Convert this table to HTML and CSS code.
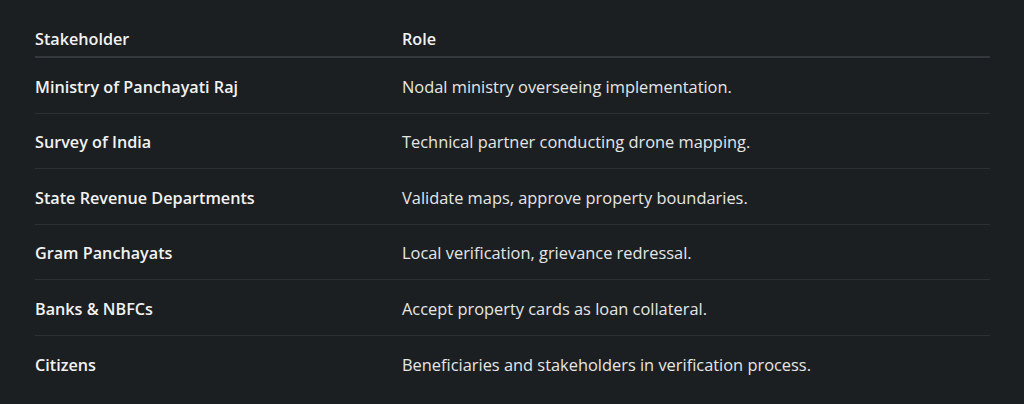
FILE: index.html
```html
<!DOCTYPE html>
<html lang="en">
<head>
<meta charset="utf-8">
<link rel="stylesheet" href="styles.css">
</head>
<body>
<div class="page">
  <div class="table">
    <div class="row head">
      <div class="cell c1">Stakeholder</div>
      <div class="cell c2">Role</div>
    </div>
    <div class="row">
      <div class="cell c1">Ministry of Panchayati Raj</div>
      <div class="cell c2">Nodal ministry overseeing implementation.</div>
    </div>
    <div class="row">
      <div class="cell c1">Survey of India</div>
      <div class="cell c2">Technical partner conducting drone mapping.</div>
    </div>
    <div class="row">
      <div class="cell c1">State Revenue Departments</div>
      <div class="cell c2">Validate maps, approve property boundaries.</div>
    </div>
    <div class="row">
      <div class="cell c1">Gram Panchayats</div>
      <div class="cell c2">Local verification, grievance redressal.</div>
    </div>
    <div class="row">
      <div class="cell c1">Banks &amp; NBFCs</div>
      <div class="cell c2">Accept property cards as loan collateral.</div>
    </div>
    <div class="row last">
      <div class="cell c1">Citizens</div>
      <div class="cell c2">Beneficiaries and stakeholders in verification process.</div>
    </div>
  </div>
</div>
</body>
</html>
```

FILE: styles.css
```css
html, body {
  margin: 0;
  padding: 0;
  background: #1b1f21;
}
body {
  width: 1024px;
  height: 404px;
  overflow: hidden;
  font-family: "Open Sans", "Noto Sans", sans-serif;
  color: #e8e8e8;
}
.page {
  padding: 0 34px 0 35px;
}
.table {
  display: flex;
  flex-direction: column;
}
.row {
  display: grid;
  grid-template-columns: 367px 1fr;
  align-items: center;
  height: 55.5px;
  padding-top: 3px;
  box-sizing: border-box;
  border-bottom: 1px solid #2b3033;
}
.row.head {
  height: 58px;
  padding-top: 21px;
  border-bottom: 2px solid #33383c;
}
.row.last {
  border-bottom: none;
}
.cell {
  line-height: 22px;
}
.c1 {
  font-size: 16.2px;
  font-weight: 600;
  color: #f2f2f2;
}
.c2 {
  font-size: 16.4px;
  font-weight: 400;
  color: #e6e6e6;
}
.head .c2 {
  font-size: 16.2px;
  font-weight: 600;
  color: #f2f2f2;
}
```
